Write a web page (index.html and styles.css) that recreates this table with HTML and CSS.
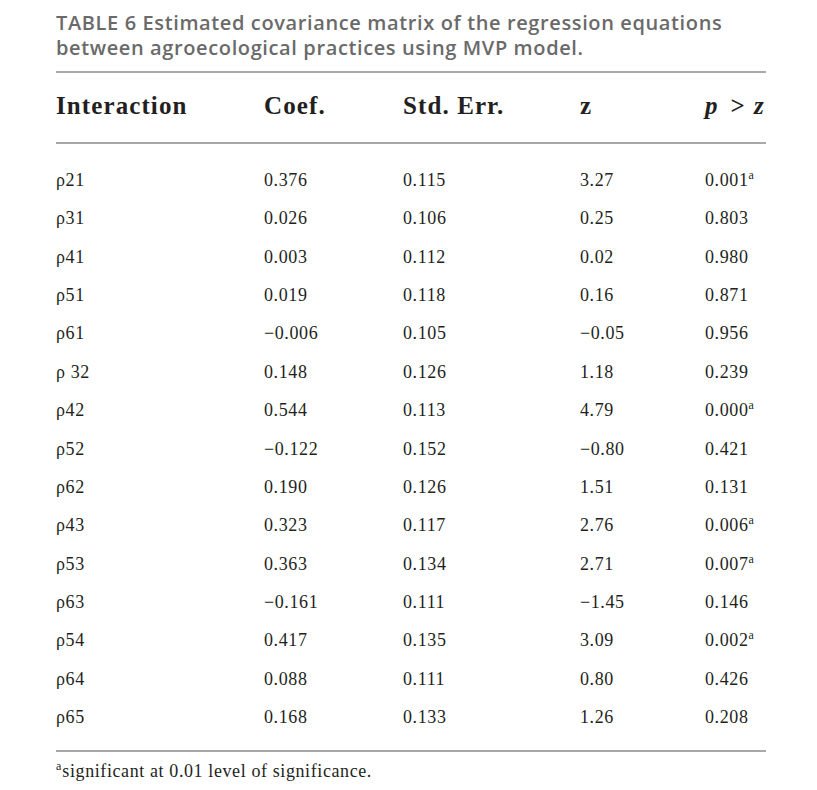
FILE: index.html
```html
<!DOCTYPE html>
<html lang="en">
<head>
<meta charset="utf-8">
<title>Table 6</title>
<link rel="stylesheet" href="styles.css">
</head>
<body>
<div class="page">
  <h1 class="caption">TABLE 6 Estimated covariance matrix of the regression equations between agroecological practices using MVP model.</h1>
  <div class="rule"></div>
  <div class="row head">
    <div>Interaction</div>
    <div>Coef.</div>
    <div>Std. Err.</div>
    <div>z</div>
    <div><i>p</i><span class="gt">&gt;</span><i>z</i></div>
  </div>
  <div class="rule"></div>
  <div class="body">
    <div class="row"><div>ρ21</div><div>0.376</div><div>0.115</div><div>3.27</div><div>0.001<sup>a</sup></div></div>
    <div class="row"><div>ρ31</div><div>0.026</div><div>0.106</div><div>0.25</div><div>0.803</div></div>
    <div class="row"><div>ρ41</div><div>0.003</div><div>0.112</div><div>0.02</div><div>0.980</div></div>
    <div class="row"><div>ρ51</div><div>0.019</div><div>0.118</div><div>0.16</div><div>0.871</div></div>
    <div class="row"><div>ρ61</div><div>−0.006</div><div>0.105</div><div>−0.05</div><div>0.956</div></div>
    <div class="row"><div>ρ 32</div><div>0.148</div><div>0.126</div><div>1.18</div><div>0.239</div></div>
    <div class="row"><div>ρ42</div><div>0.544</div><div>0.113</div><div>4.79</div><div>0.000<sup>a</sup></div></div>
    <div class="row"><div>ρ52</div><div>−0.122</div><div>0.152</div><div>−0.80</div><div>0.421</div></div>
    <div class="row"><div>ρ62</div><div>0.190</div><div>0.126</div><div>1.51</div><div>0.131</div></div>
    <div class="row"><div>ρ43</div><div>0.323</div><div>0.117</div><div>2.76</div><div>0.006<sup>a</sup></div></div>
    <div class="row"><div>ρ53</div><div>0.363</div><div>0.134</div><div>2.71</div><div>0.007<sup>a</sup></div></div>
    <div class="row"><div>ρ63</div><div>−0.161</div><div>0.111</div><div>−1.45</div><div>0.146</div></div>
    <div class="row"><div>ρ54</div><div>0.417</div><div>0.135</div><div>3.09</div><div>0.002<sup>a</sup></div></div>
    <div class="row"><div>ρ64</div><div>0.088</div><div>0.111</div><div>0.80</div><div>0.426</div></div>
    <div class="row"><div>ρ65</div><div>0.168</div><div>0.133</div><div>1.26</div><div>0.208</div></div>
  </div>
  <div class="rule"></div>
  <p class="note"><sup>a</sup>significant at 0.01 level of significance.</p>
</div>
</body>
</html>
```

FILE: styles.css
```css
html, body {
  margin: 0;
  padding: 0;
  background: #ffffff;
}
.page {
  width: 710px;
  padding: 10px 0 0 56px;
  font-family: "Liberation Serif", "Times New Roman", serif;
  color: #231f20;
}
.caption {
  margin: 0;
  font-family: "Open Sans", "Noto Sans", sans-serif;
  font-weight: 600;
  font-size: 20px;
  line-height: 25px;
  color: #6a6a6a;
  letter-spacing: 0.62px;
}
.rule {
  height: 2px;
  background: #a8a8a8;
}
.caption + .rule {
  margin-top: 11px;
}
.row {
  display: grid;
  grid-template-columns: 208px 139px 177px 125px 1fr;
}
.head {
  font-weight: bold;
  font-size: 25px;
  line-height: 66px;
  padding-bottom: 3px;
  letter-spacing: 1.1px;
}
.gt {
  margin: 0 8px 0 12px;
}
.body {
  padding: 17px 0 14px;
}
.body .row {
  font-size: 18px;
  line-height: 38.36px;
  letter-spacing: 0.6px;
}
sup {
  font-size: 12px;
  line-height: 0;
  vertical-align: 7px;
  letter-spacing: 0;
}
.note {
  margin: 7px 0 0;
  font-size: 18px;
  line-height: 24px;
  letter-spacing: 0.6px;
}
.note sup {
  font-size: 12px;
  vertical-align: 7px;
  margin-right: 1px;
}
```
